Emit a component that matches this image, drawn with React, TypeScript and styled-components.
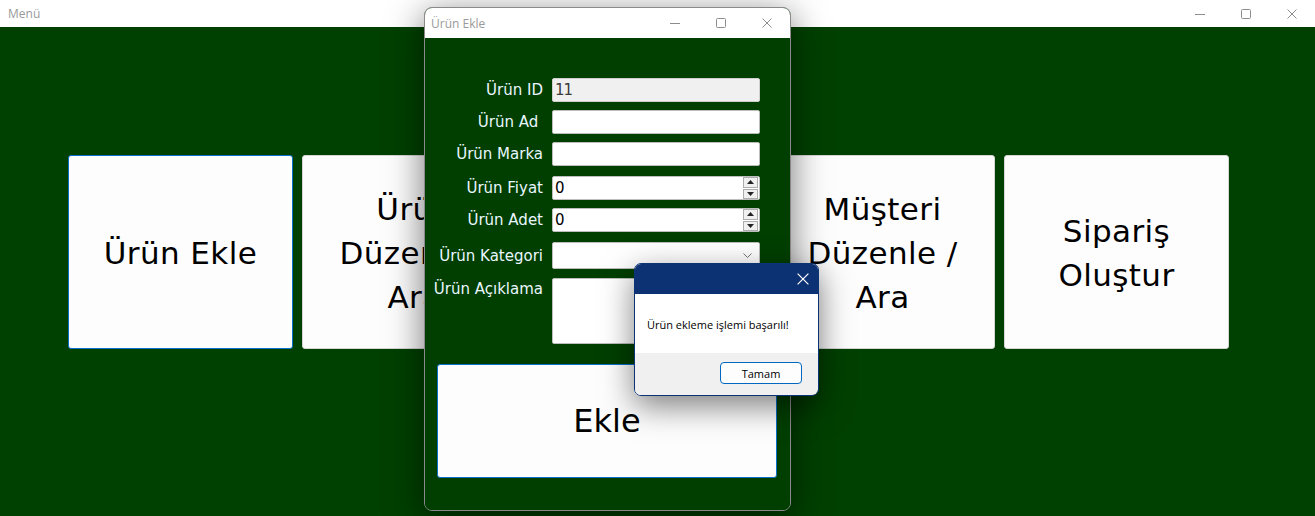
import React from "react";
import styled, { createGlobalStyle } from "styled-components";

const Global = createGlobalStyle`
  html, body { margin: 0; padding: 0; }
  body { width: 1315px; height: 516px; overflow: hidden; background: #fff; }
  * { box-sizing: border-box; }
`;

const Screen = styled.div`
  position: relative;
  width: 1315px;
  height: 516px;
  display: flex;
  flex-direction: column;
  overflow: hidden;
`;

const TitleBar = styled.div<{ $h: number }>`
  height: ${(p) => p.$h}px;
  flex: 0 0 auto;
  background: #fff;
  display: flex;
  align-items: center;
  font-family: "Open Sans", "Noto Sans", sans-serif;
`;

const TitleText = styled.span<{ $pad: number }>`
  padding-left: ${(p) => p.$pad}px;
  font-size: 12px;
  color: #9a9a9a;
  flex: 1;
`;

const Controls = styled.div`
  display: flex;
  height: 100%;
`;

const CtrlBtn = styled.div<{ $w: number }>`
  width: ${(p) => p.$w}px;
  height: 100%;
  display: flex;
  align-items: center;
  justify-content: center;
  color: #8c8c8c;
`;

const Desktop = styled.div`
  flex: 1;
  background: #004000;
  padding: 128px 0 0 68px;
`;

const TileRow = styled.div`
  display: flex;
  gap: 9px;
`;

const Tile = styled.div<{ $focused?: boolean }>`
  width: 225px;
  height: 194px;
  background: #fdfdfd;
  border: 1px solid ${(p) => (p.$focused ? "#0a6fc9" : "#d6d6d6")};
  border-radius: 3px;
  display: flex;
  align-items: center;
  justify-content: center;
  text-align: center;
  white-space: pre-line;
  font-family: "DejaVu Sans", sans-serif;
  font-size: 31px;
  letter-spacing: 0.4px;
  line-height: 44px;
  padding-top: 2px;
  color: #000;
`;

const Dialog = styled.div`
  position: absolute;
  left: 424px;
  top: 7px;
  width: 367px;
  height: 504px;
  border: 1px solid #8a8a8a;
  border-radius: 8px;
  overflow: hidden;
  display: flex;
  flex-direction: column;
  box-shadow: 0 8px 36px rgba(0, 0, 0, 0.55);
  background: #003f00;
`;

const DialogBody = styled.div`
  flex: 1;
  background: #003f00;
  padding: 40px 0 0 0;
  display: flex;
  flex-direction: column;
`;

const Form = styled.div`
  display: grid;
  grid-template-columns: 118px 208px;
  column-gap: 9px;
`;

const Label = styled.div<{ $top: number; $start?: boolean }>`
  margin-top: ${(p) => p.$top}px;
  align-self: ${(p) => (p.$start ? "start" : "center")};
  padding-top: ${(p) => (p.$start ? 2 : 0)}px;
  text-align: right;
  font-family: "DejaVu Sans", sans-serif;
  font-size: 15px;
  color: #eaf6ff;
  white-space: nowrap;
`;

const Input = styled.div<{ $top: number; $h: number; $disabled?: boolean }>`
  margin-top: ${(p) => p.$top}px;
  height: ${(p) => p.$h}px;
  background: ${(p) => (p.$disabled ? "#f0f0f0" : "#fff")};
  border: 1px solid ${(p) => (p.$disabled ? "#cfcfcf" : "#bdbdbd")};
  border-radius: 2px;
  display: flex;
  align-items: center;
  padding-left: 2px;
  font-family: "DejaVu Sans", sans-serif;
  font-size: 15px;
  color: #000;
`;

const InputValue = styled.span<{ $muted?: boolean }>`
  flex: 1;
  color: ${(p) => (p.$muted ? "#3c3c3c" : "#000")};
  letter-spacing: -1px;
`;

const Spinner = styled.div`
  width: 15px;
  height: 22px;
  margin-right: 1px;
  display: flex;
  flex-direction: column;
  gap: 1px;
`;

const SpinBtn = styled.div`
  flex: 1;
  background: #f0f0f0;
  border: 1px solid #adadad;
  display: flex;
  align-items: center;
  justify-content: center;
`;

const Chevron = styled.div`
  width: 16px;
  margin-right: 4px;
  display: flex;
  justify-content: center;
`;

const BigButton = styled.div`
  margin: 20px 0 0 12px;
  width: 340px;
  height: 114px;
  background: #fdfdfd;
  border: 1px solid #0a6fc9;
  border-radius: 3px;
  display: flex;
  align-items: center;
  justify-content: center;
  font-family: "DejaVu Sans", sans-serif;
  font-size: 32px;
  color: #000;
`;

const MsgBox = styled.div`
  position: absolute;
  left: 634px;
  top: 263px;
  width: 185px;
  height: 133px;
  border: 1px solid #0b3376;
  border-radius: 7px;
  overflow: hidden;
  display: flex;
  flex-direction: column;
  box-shadow: 0 10px 32px rgba(0, 0, 0, 0.5);
  font-family: "Open Sans", "Noto Sans", sans-serif;
`;

const MsgTitle = styled.div`
  height: 30px;
  background: #0c3273;
  display: flex;
  justify-content: flex-end;
  align-items: center;
  padding-right: 9px;
  color: #fff;
`;

const MsgBody = styled.div`
  height: 59px;
  background: #fff;
  display: flex;
  align-items: center;
  padding-left: 12px;
  padding-top: 2px;
  font-size: 11px;
  color: #000;
`;

const MsgFooter = styled.div`
  flex: 1;
  background: #f0f0f0;
  display: flex;
  justify-content: flex-end;
  align-items: flex-start;
  padding: 9px 16px 0 0;
`;

const OkButton = styled.div`
  width: 82px;
  height: 22px;
  background: #fdfdfd;
  border: 1px solid #0067c0;
  border-radius: 4px;
  display: flex;
  align-items: center;
  justify-content: center;
  font-size: 11px;
  color: #000;
`;

const MinIcon = () => (
  <svg width="10" height="10" viewBox="0 0 10 10">
    <line x1="0" y1="5.5" x2="10" y2="5.5" stroke="currentColor" strokeWidth="1" />
  </svg>
);
const MaxIcon = () => (
  <svg width="10" height="10" viewBox="0 0 10 10">
    <rect x="0.5" y="0.5" width="9" height="9" rx="1" fill="none" stroke="currentColor" strokeWidth="1" />
  </svg>
);
const CloseIcon = ({ size = 10 }: { size?: number }) => (
  <svg width={size} height={size} viewBox="0 0 10 10">
    <path d="M0.5 0.5 L9.5 9.5 M9.5 0.5 L0.5 9.5" stroke="currentColor" strokeWidth="1" fill="none" />
  </svg>
);

const WinControls = ({ w }: { w: number }) => (
  <Controls>
    <CtrlBtn $w={w}><MinIcon /></CtrlBtn>
    <CtrlBtn $w={w}><MaxIcon /></CtrlBtn>
    <CtrlBtn $w={w}><CloseIcon /></CtrlBtn>
  </Controls>
);

const SpinArrow = ({ up }: { up?: boolean }) => (
  <svg width="7" height="4" viewBox="0 0 7 4">
    <path d={up ? "M0 4 L3.5 0 L7 4 Z" : "M0 0 L3.5 4 L7 0 Z"} fill="#222" />
  </svg>
);

const NumberBox = ({ top }: { top: number }) => (
  <Input $top={top} $h={24}>
    <InputValue>0</InputValue>
    <Spinner>
      <SpinBtn><SpinArrow up /></SpinBtn>
      <SpinBtn><SpinArrow /></SpinBtn>
    </Spinner>
  </Input>
);

const tiles = [
  { text: "Ürün Ekle", focused: true },
  { text: "Ürün\nDüzenle /\nAra" },
  { text: "Müşteri\nEkle" },
  { text: "Müşteri\nDüzenle /\nAra" },
  { text: "Sipariş\nOluştur" },
];

export default function App() {
  return (
    <Screen>
      <Global />
      <TitleBar $h={27}>
        <TitleText $pad={8}>Menü</TitleText>
        <WinControls w={46} />
      </TitleBar>
      <Desktop>
        <TileRow>
          {tiles.map((t, i) => (
            <Tile key={i} $focused={t.focused}>{t.text}</Tile>
          ))}
        </TileRow>
      </Desktop>

      <Dialog>
        <TitleBar $h={30}>
          <TitleText $pad={6}>Ürün Ekle</TitleText>
          <WinControls w={46} />
        </TitleBar>
        <DialogBody>
          <Form>
            <Label $top={0}>Ürün ID</Label>
            <Input $top={0} $h={24} $disabled>
              <InputValue $muted>11</InputValue>
            </Input>
            <Label $top={8}>Ürün Ad&nbsp;</Label>
            <Input $top={8} $h={24} />
            <Label $top={8}>Ürün Marka</Label>
            <Input $top={8} $h={24} />
            <Label $top={10}>Ürün Fiyat</Label>
            <NumberBox top={10} />
            <Label $top={8}>Ürün Adet</Label>
            <NumberBox top={8} />
            <Label $top={10}>Ürün Kategori</Label>
            <Input $top={10} $h={27}>
              <InputValue />
              <Chevron>
                <svg width="9" height="5" viewBox="0 0 9 5">
                  <path d="M0.5 0.5 L4.5 4.5 L8.5 0.5" stroke="#777" strokeWidth="1" fill="none" />
                </svg>
              </Chevron>
            </Input>
            <Label $top={9} $start>Ürün Açıklama</Label>
            <Input $top={9} $h={66} />
          </Form>
          <BigButton>Ekle</BigButton>
        </DialogBody>
      </Dialog>

      <MsgBox>
        <MsgTitle>
          <CloseIcon size={12} />
        </MsgTitle>
        <MsgBody>Ürün ekleme işlemi başarılı!</MsgBody>
        <MsgFooter>
          <OkButton>Tamam</OkButton>
        </MsgFooter>
      </MsgBox>
    </Screen>
  );
}
